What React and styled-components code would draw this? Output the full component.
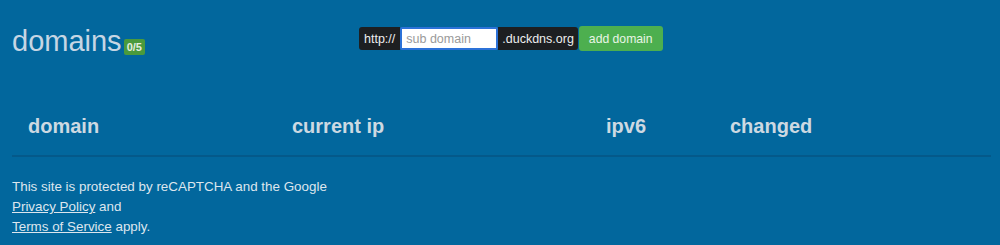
import React from 'react';
import styled, { createGlobalStyle } from 'styled-components';

const GlobalStyle = createGlobalStyle`
  body {
    margin: 0;
    background-color: #02679d;
    font-family: "Liberation Sans", Arial, sans-serif;
  }
`;

const Page = styled.div`
  width: 1000px;
  height: 245px;
  padding: 0 9px 0 12px;
  box-sizing: border-box;
  background-color: #02679d;
  overflow: hidden;
`;

const TopRow = styled.div`
  display: flex;
  align-items: flex-start;
  height: 96px;
`;

const Title = styled.h1`
  margin: 25px 0 0 0;
  font-size: 29px;
  font-weight: normal;
  color: #c6d6e4;
  display: flex;
  align-items: baseline;
  width: 347px;
`;

const Badge = styled.span`
  margin-left: 2px;
  padding: 2px 3px;
  font-size: 11px;
  font-weight: bold;
  color: #e4efe0;
  background-color: #4a9a3c;
  border-radius: 2px;
`;

const AddForm = styled.form`
  display: flex;
  align-items: center;
  margin-top: 26px;
`;

const Addon = styled.span`
  height: 23px;
  display: flex;
  align-items: center;
  padding: 0 ${(p) => p.$pad || 5}px;
  font-size: 12.5px;
  color: #eeeeee;
  background-color: #1d1f21;
  border-radius: ${(p) => (p.$left ? '3px 0 0 3px' : '0 3px 3px 0')};
`;

const Input = styled.input`
  width: 98px;
  height: 23px;
  box-sizing: border-box;
  padding: 0 4px;
  border: 2px solid #2c72d8;
  border-radius: 2px;
  outline: none;
  font-family: "Liberation Sans", Arial, sans-serif;
  font-size: 12.5px;
  color: #333;
  &::placeholder {
    color: #9a9a9a;
  }
`;

const AddButton = styled.button`
  height: 25px;
  margin-left: 1px;
  padding: 0 10px;
  border: none;
  border-radius: 3px;
  font-family: "Liberation Sans", Arial, sans-serif;
  font-size: 12.2px;
  color: #e9f5e6;
  background-color: #4daf4f;
  cursor: pointer;
`;

const Table = styled.div`
  border-bottom: 2px solid #04598a;
`;

const HeaderRow = styled.div`
  display: grid;
  grid-template-columns: 264px 314px 124px 1fr;
  padding: 19px 0 17px 16px;
`;

const HeaderCell = styled.div`
  font-size: 20px;
  font-weight: bold;
  color: #cdd9e2;
`;

const Footer = styled.div`
  margin-top: 20px;
  font-size: 13.4px;
  line-height: 20px;
  color: #dde6ee;
`;

const FooterLink = styled.a`
  color: #dde6ee;
  text-decoration: underline;
`;

const App = () => {
  return (
    <>
      <GlobalStyle />
      <Page>
        <TopRow>
          <Title>
            domains
            <Badge>0/5</Badge>
          </Title>
          <AddForm onSubmit={(e) => e.preventDefault()}>
            <Addon $left>http://</Addon>
            <Input placeholder="sub domain" />
            <Addon $pad={4}>.duckdns.org</Addon>
            <AddButton>add domain</AddButton>
          </AddForm>
        </TopRow>
        <Table>
          <HeaderRow>
            <HeaderCell>domain</HeaderCell>
            <HeaderCell>current ip</HeaderCell>
            <HeaderCell>ipv6</HeaderCell>
            <HeaderCell>changed</HeaderCell>
          </HeaderRow>
        </Table>
        <Footer>
          This site is protected by reCAPTCHA and the Google
          <br />
          <FooterLink href="#">Privacy Policy</FooterLink> and
          <br />
          <FooterLink href="#">Terms of Service</FooterLink> apply.
        </Footer>
      </Page>
    </>
  );
};

export default App;
